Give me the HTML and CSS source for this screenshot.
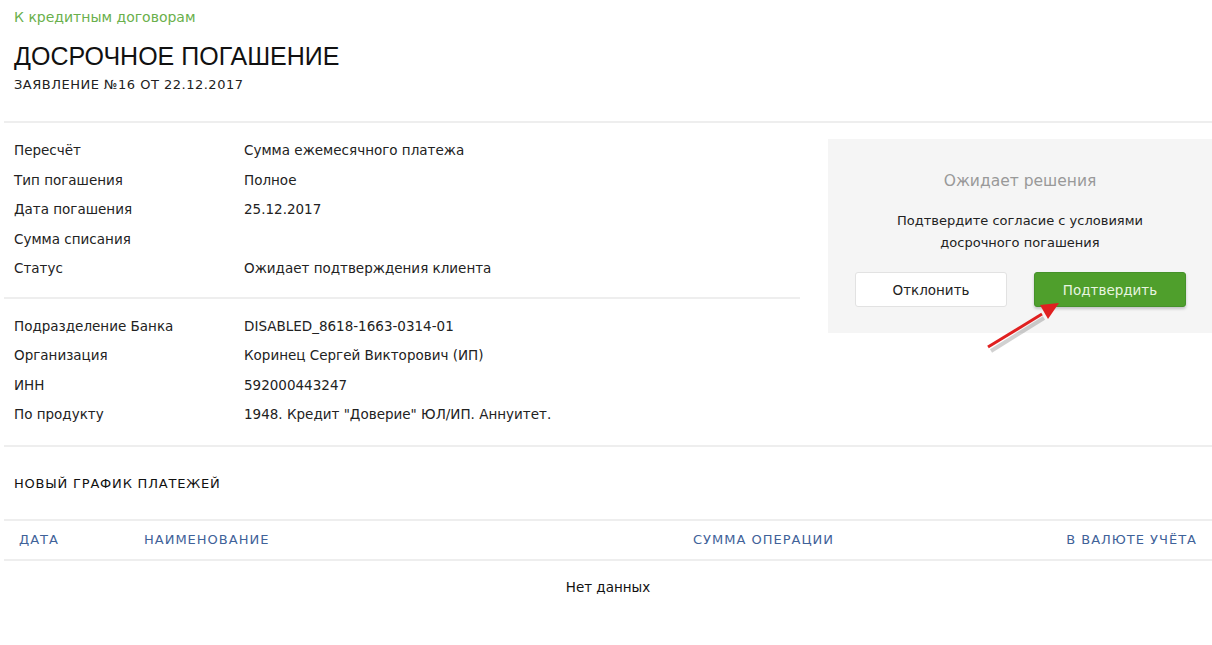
FILE: index.html
```html
<!DOCTYPE html>
<html lang="ru">
<head>
    <meta charset="UTF-8">
    <title>Досрочное погашение</title>
    <link rel="stylesheet" href="styles.css">
</head>
<body>
    <div class="page">
        <div class="head">
            <a class="back-link" href="#">К кредитным договорам</a>
            <h1>ДОСРОЧНОЕ ПОГАШЕНИЕ</h1>
            <div class="subtitle">ЗАЯВЛЕНИЕ №16 ОТ 22.12.2017</div>
        </div>

        <div class="details">
            <div class="details-left">
                <div class="group">
                    <div class="row"><span class="label">Пересчёт</span><span class="value">Сумма ежемесячного платежа</span></div>
                    <div class="row"><span class="label">Тип погашения</span><span class="value">Полное</span></div>
                    <div class="row"><span class="label">Дата погашения</span><span class="value">25.12.2017</span></div>
                    <div class="row"><span class="label">Сумма списания</span><span class="value"></span></div>
                    <div class="row"><span class="label">Статус</span><span class="value">Ожидает подтверждения клиента</span></div>
                </div>
                <div class="group group-second">
                    <div class="row"><span class="label">Подразделение Банка</span><span class="value">DISABLED_8618-1663-0314-01</span></div>
                    <div class="row"><span class="label">Организация</span><span class="value">Коринец Сергей Викторович (ИП)</span></div>
                    <div class="row"><span class="label">ИНН</span><span class="value">592000443247</span></div>
                    <div class="row"><span class="label">По продукту</span><span class="value">1948. Кредит "Доверие" ЮЛ/ИП. Аннуитет.</span></div>
                </div>
            </div>

            <div class="decision">
                <div class="decision-status">Ожидает решения</div>
                <div class="decision-text">Подтвердите согласие с условиями<br>досрочного погашения</div>
                <div class="decision-actions">
                    <button class="btn btn-decline">Отклонить</button>
                    <button class="btn btn-confirm">Подтвердить</button>
                </div>
                <!-- red pointer drawn over the panel -->
                <svg class="arrow" width="90" height="70" viewBox="0 0 90 70">
                    <line x1="9" y1="52" x2="62" y2="19" stroke="rgba(0,0,0,0.18)" stroke-width="4"/>
                    <line x1="6" y1="48" x2="60" y2="15" stroke="#e02020" stroke-width="3"/>
                    <polygon points="77,4 58,6 66,20" fill="#e02020"/>
                </svg>
            </div>
        </div>

        <div class="schedule">
            <h2>НОВЫЙ ГРАФИК ПЛАТЕЖЕЙ</h2>
            <div class="table">
                <div class="table-head">
                    <span>ДАТА</span>
                    <span>НАИМЕНОВАНИЕ</span>
                    <span>СУММА ОПЕРАЦИИ</span>
                    <span class="right">В ВАЛЮТЕ УЧЁТА</span>
                </div>
                <div class="table-empty">Нет данных</div>
            </div>
        </div>
    </div>
</body>
</html>
```

FILE: styles.css
```css
body {
    margin: 0;
    font-family: "DejaVu Sans", "Liberation Sans", sans-serif;
    color: #222;
    background-color: #fff;
}

.page {
    padding-left: 4px;
}

.head {
    padding: 8px 10px 27px;
    border-bottom: 2px solid #eeeeee;
}

.back-link {
    display: block;
    font-size: 14px;
    line-height: 18px;
    color: #6ab04c;
    text-decoration: none;
}

h1 {
    margin: 15px 0 0;
    font-family: "Liberation Sans", Arial, sans-serif;
    font-size: 25px;
    font-weight: normal;
    line-height: 30px;
    color: #111;
}

.subtitle {
    margin-top: 5px;
    font-size: 13px;
    letter-spacing: 0.5px;
    line-height: 18px;
    color: #222;
}

.details {
    display: flex;
    position: relative;
    border-bottom: 2px solid #eeeeee;
}

.details-left {
    width: 796px;
}

.group {
    padding: 13px 10px 13px;
}

.group-second {
    border-top: 2px solid #eeeeee;
    padding-top: 13px;
    padding-bottom: 15px;
}

.row {
    display: flex;
    font-size: 13.5px;
    line-height: 29.5px;
}

.label {
    width: 230px;
}

.decision {
    position: relative;
    flex: 1;
    margin: 16px 0 0 28px;
    height: 194px;
    background-color: #f5f5f5;
    text-align: center;
}

.decision-status {
    padding-top: 32px;
    font-size: 15.5px;
    line-height: 20px;
    color: #999;
}

.decision-text {
    margin-top: 19px;
    font-size: 13px;
    line-height: 22px;
    color: #222;
}

.decision-actions {
    display: flex;
    gap: 27px;
    padding: 18px 0 0 27px;
}

.btn {
    width: 152px;
    height: 35px;
    border-radius: 3px;
    font-family: inherit;
    font-size: 13.5px;
    cursor: pointer;
}

.btn-decline {
    background-color: #fff;
    border: 1px solid #e2e2e2;
    color: #222;
}

.btn-confirm {
    background-color: #4f9f2c;
    border: 1px solid #45922a;
    color: #e8f5e0;
    box-shadow: 0 2px 3px rgba(0, 0, 0, 0.2);
}

.arrow {
    position: absolute;
    left: 154px;
    top: 160px;
}

.schedule h2 {
    margin: 0;
    padding: 28px 10px 26px;
    font-size: 13px;
    font-weight: normal;
    letter-spacing: 0.8px;
    line-height: 18px;
    color: #111;
}

.table-head {
    display: grid;
    grid-template-columns: 125px 549px 200px 1fr;
    border-top: 2px solid #eeeeee;
    border-bottom: 2px solid #eeeeee;
    font-size: 13px;
    letter-spacing: 1px;
    line-height: 38px;
    color: #3f6299;
}

.table-head span {
    padding: 0 15px;
}

.table-head .right {
    text-align: right;
}

.table-empty {
    padding-top: 17px;
    font-size: 13.5px;
    line-height: 18px;
    text-align: center;
    color: #111;
}
```
